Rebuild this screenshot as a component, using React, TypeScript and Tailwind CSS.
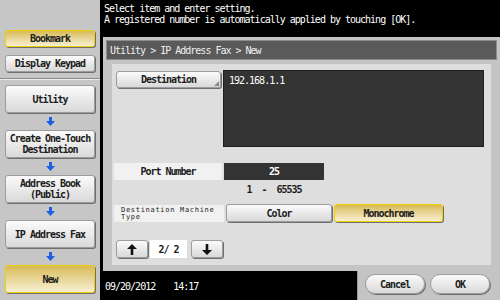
import React from "react";

const font = "font-['DejaVu_Sans_Mono','Liberation_Mono',monospace] text-[10px] tracking-[-1px]";
const grayBtn =
  "border border-[#9c9c9c] bg-gradient-to-b from-[#fbfbfb] to-[#d9d9d9] shadow-[1px_1px_0_#6f6f6f] text-[#1c1c1c]";
const yellowBtn =
  "border border-[#f0cf00] bg-gradient-to-b from-[#d8bb55] to-[#f8f0d2] shadow-[1px_1px_0_#6f6f6f] text-[#1c1c1c]";

function DownArrow() {
  return (
    <svg width="9" height="9" viewBox="0 0 9 9" className="mx-auto">
      <path d="M3 0h3v4h3L4.5 9 0 4h3z" fill="#1e5fe6" />
    </svg>
  );
}

function ArrowGap() {
  return (
    <div className="flex h-[17px] items-center justify-center">
      <DownArrow />
    </div>
  );
}

function SideButton({
  label,
  active,
  tall,
}: {
  label: string;
  active?: boolean;
  tall?: boolean;
}) {
  return (
    <div
      className={`mx-[5px] flex items-center justify-center rounded-[3px] text-center font-semibold leading-[11px] ${
        tall ? "h-[28px]" : "h-[17px]"
      } ${active ? yellowBtn : grayBtn}`}
    >
      <span className="whitespace-pre-line">{label}</span>
    </div>
  );
}

function PageArrow({ up }: { up?: boolean }) {
  return (
    <div className={`flex h-[18px] w-[32px] items-center justify-center rounded-[3px] ${grayBtn}`}>
      <svg width="10" height="11" viewBox="0 0 10 11">
        {up ? (
          <path d="M5 0L10 5H6.3V11H3.7V5H0z" fill="#111" />
        ) : (
          <path d="M5 11L10 6H6.3V0H3.7V6H0z" fill="#111" />
        )}
      </svg>
    </div>
  );
}

export default function App() {
  return (
    <div className={`flex h-[300px] w-[500px] overflow-hidden bg-black ${font}`}>
      {/* left navigation */}
      <aside className="flex h-full w-[100px] shrink-0 flex-col bg-[#c6c6c6] pt-[30px]">
        <SideButton label="Bookmark" active />
        <div className="mt-[8px]">
          <SideButton label="Display Keypad" />
        </div>
        <div className="mt-[6px] h-[2px] border-t border-b border-t-[#8a8a8a] border-b-[#ececec]" />
        <div className="mt-[5px]">
          <SideButton label="Utility" tall />
        </div>
        <ArrowGap />
        <SideButton label={"Create One-Touch\nDestination"} tall />
        <ArrowGap />
        <SideButton label={"Address Book\n(Public)"} tall />
        <ArrowGap />
        <SideButton label="IP Address Fax" tall />
        <ArrowGap />
        <SideButton label="New" active tall />
      </aside>

      <div className="flex w-[400px] flex-col">
        <div className="h-[37px] px-[4px] pt-[3px] leading-[11px] text-white">
          <p>Select item and enter setting.</p>
          <p>A registered number is automatically applied by touching [OK].</p>
        </div>

        <div className="flex h-[234px]">
          <div className="w-[3px]" />
          <div className="flex flex-1 flex-col bg-[#c4c4c4] px-[3px] pt-[3px]">
            <div className="flex h-[20px] items-center border border-[#8c8c8c] bg-[#5a5a5a] px-[3px] text-[#efefef]">
              Utility &gt; IP Address Fax &gt; New
            </div>
            <div className="flex-1 px-[6px] pt-[4px] pb-[6px]">
              <div className="flex h-full flex-col bg-[#dedede] pl-[2px]">
                <div className="mt-[6px] flex items-start gap-[2px]">
                  <div
                    className={`relative ml-[2px] mt-[1px] flex h-[17px] w-[105px] items-center justify-center rounded-[3px] font-semibold ${grayBtn}`}
                  >
                    Destination
                    <span className="absolute right-[1px] bottom-[1px] h-0 w-0 border-b-[5px] border-l-[5px] border-b-[#8a8a8a] border-l-transparent" />
                  </div>
                  <div className="h-[77px] w-[261px] border border-[#1e1e1e] bg-[#333333] px-[5px] pt-[4px] leading-[11px] text-white">
                    192.168.1.1
                  </div>
                </div>

                <div className="mt-[16px] flex gap-[2px]">
                  <div className="flex h-[17px] w-[108px] items-center justify-center bg-[#f1f1f1] font-semibold text-[#1c1c1c]">
                    Port Number
                  </div>
                  <div className="flex h-[17px] w-[100px] items-center justify-center bg-[#333333] font-semibold text-white">
                    25
                  </div>
                </div>
                <div className="mt-[3px] flex h-[12px] items-center">
                  <div className="w-[110px]" />
                  <div className="w-[100px] whitespace-pre text-center font-semibold text-[#1c1c1c]">1  -  65535</div>
                </div>

                <div className="mt-[9px] flex items-start gap-[2px]">
                  <div className="mt-[1px] flex h-[17px] w-[110px] flex-col justify-center bg-[#f1f1f1] pl-[7px] text-[7px] leading-[7px] tracking-[0.7px] text-[#1c1c1c]">
                    <span>Destination Machine</span>
                    <span>Type</span>
                  </div>
                  <div className={`flex h-[18px] w-[106px] items-center justify-center rounded-[3px] font-semibold ${grayBtn}`}>
                    Color
                  </div>
                  <div className={`flex h-[18px] w-[109px] items-center justify-center rounded-[3px] font-semibold ${yellowBtn}`}>
                    Monochrome
                  </div>
                </div>

                <div className="mt-[18px] ml-[2px] flex items-center gap-[2px]">
                  <PageArrow up />
                  <div className="flex h-[18px] w-[37px] items-center justify-center whitespace-pre bg-white font-semibold text-[#1c1c1c]">
                    2/ 2
                  </div>
                  <div className="ml-[2px]">
                    <PageArrow />
                  </div>
                </div>
              </div>
            </div>
          </div>
        </div>

        <div className="flex h-[29px]">
          <div className="flex w-[257px] items-center gap-[18px] whitespace-pre pl-[5px] pt-[1px] text-white">
            <span>09/20/2012</span>
            <span>14:17</span>
          </div>
          <div className="flex flex-1 items-start gap-[5px] border-l border-[#9a9a9a] bg-[#c4c4c4] pl-[7px] pt-[3px]">
            <div className={`flex h-[20px] w-[60px] items-center justify-center rounded-full font-semibold ${grayBtn}`}>
              Cancel
            </div>
            <div className={`flex h-[20px] w-[60px] items-center justify-center rounded-full font-semibold ${grayBtn}`}>
              OK
            </div>
          </div>
        </div>
      </div>
    </div>
  );
}
